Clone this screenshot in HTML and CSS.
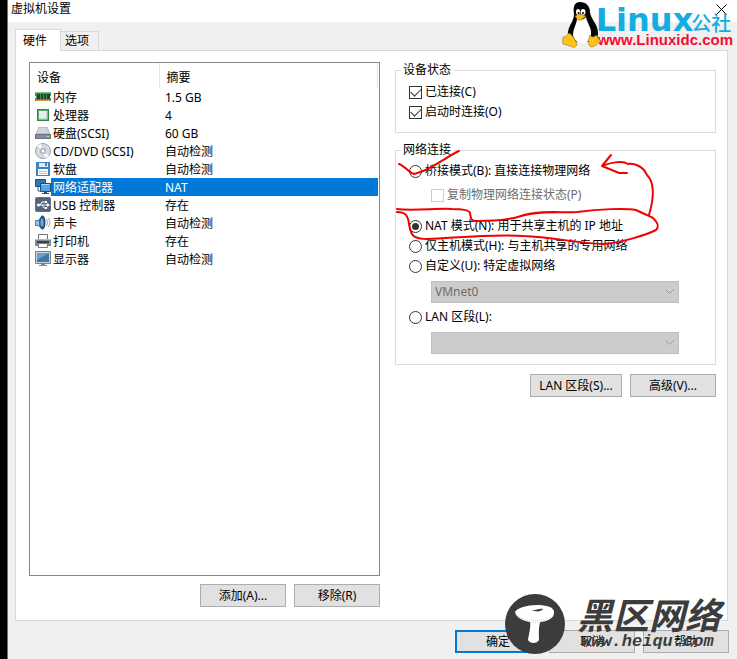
FILE: index.html
```
<!DOCTYPE html>
<html lang="zh-CN">
<head>
    <meta charset="UTF-8">
    <meta name="viewport" content="width=device-width, initial-scale=1.0">
    <title>虚拟机设置</title>
    <link rel="stylesheet" href="styles.css">
</head>
<body>
    <div class="dialog">
        <header class="titlebar">
            <h1>虚拟机设置</h1>
            <button class="close" type="button" aria-label="关闭">
                <svg width="11" height="11" viewBox="0 0 11 11"><path d="M.5.5l10 10M10.5.5l-10 10" stroke="#000" fill="none"/></svg>
            </button>
        </header>

        <nav class="tabs" role="tablist">
            <button class="tab active" type="button" role="tab" aria-selected="true">硬件</button>
            <button class="tab" type="button" role="tab" aria-selected="false">选项</button>
        </nav>

        <main class="panel">
            <section class="devices">
                <div class="device-list">
                    <table>
                        <thead>
                            <tr><th class="col-name">设备</th><th>摘要</th></tr>
                        </thead>
                        <tbody>
                            <tr>
                                <td><div class="device">
                                    <svg class="icon" viewBox="0 0 16 16"><path d="M0 3h16v9H0z" fill="#3c9a4c"/><path d="M0 3h16v1H0z" fill="#7cc487"/><path d="M2 5h3v5H2zM6 5h2v5H6zM9 5h2v5H9zM12 5h3v5h-3z" fill="#2b3d3a"/><path d="M1 11.500h14" stroke="#e2a54a" stroke-dasharray="1.500 .5"/><path d="M0 7h1v2H0zM15 7h1v2h-1z" fill="#fff"/></svg>
                                    <span>内存</span></div></td>
                                <td>1.5 GB</td>
                            </tr>
                            <tr>
                                <td><div class="device">
                                    <svg class="icon" viewBox="0 0 16 16"><path d="M2 2h12v12H2z" fill="#258a45"/><path d="M3 3h10v10H3z" fill="#58b36d"/><path d="M4 4h8v8H4z" fill="#e9ecea"/><path d="M4 12h8V4" fill="none" stroke="#b5bdb8"/></svg>
                                    <span>处理器</span></div></td>
                                <td>4</td>
                            </tr>
                            <tr>
                                <td><div class="device">
                                    <svg class="icon" viewBox="0 0 16 16"><path d="M3.500 2h9L16 10H0z" fill="#b3bdc8"/><path d="M4 3h8l2 5H2z" fill="#cfd6dd"/><path d="M0 9h16v5H0z" fill="#69747f"/><path d="M1 10h14v3H1z" fill="#828d99"/><path d="M12 11h2v1h-2z" fill="#c5ef66"/></svg>
                                    <span>硬盘(SCSI)</span></div></td>
                                <td>60 GB</td>
                            </tr>
                            <tr>
                                <td><div class="device">
                                    <svg class="icon" viewBox="0 0 16 16"><circle cx="8" cy="8" r="7.500" fill="#d5dadf" stroke="#9ca5ae"/><path d="M8 8L2 3a8 8 0 0 1 4-2zM8 8l6 5a8 8 0 0 1-4 2z" fill="#f7f9fb"/><circle cx="8" cy="8" r="3" fill="#a9b4be"/><circle cx="8" cy="8" r="1.500" fill="#fff"/></svg>
                                    <span>CD/DVD (SCSI)</span></div></td>
                                <td>自动检测</td>
                            </tr>
                            <tr>
                                <td><div class="device">
                                    <svg class="icon" viewBox="0 0 16 16"><path d="M1 1h14v14H1z" fill="#3b83c4"/><path d="M4 2h9v4H4z" fill="#dcebf7"/><path d="M10 2h2v3h-2z" fill="#3b83c4"/><path d="M3 8h10v6H3z" fill="#fff"/><path d="M4 10.500h8M4 12.500h8" stroke="#b7c4d0"/></svg>
                                    <span>软盘</span></div></td>
                                <td>自动检测</td>
                            </tr>
                            <tr class="selected">
                                <td><div class="device">
                                    <svg class="icon" viewBox="0 0 16 16"><path d="M.5.5h10v7H.5z" fill="#2f78b5" stroke="#164f86"/><path d="M3 8v4h3" fill="none" stroke="#3a5f80"/><path d="M5.500 4.500h10v8h-10z" fill="#58a5df" stroke="#164f86"/><path d="M6.500 5.500h8" stroke="#a4d2f3"/><path d="M9 13h3v1h2v1H7v-1h2z" fill="#24517c"/></svg>
                                    <span>网络适配器</span></div></td>
                                <td>NAT</td>
                            </tr>
                            <tr>
                                <td><div class="device">
                                    <svg class="icon" viewBox="0 0 16 16"><rect x=".5" y=".5" width="15" height="14" rx="1" fill="#50657c" stroke="#5f7489"/><path d="M3 8h10M5 8l2-3h3M7 8l2 3h2" fill="none" stroke="#fff"/><circle cx="3.500" cy="8" r="1.500" fill="#fff"/><path d="M12 6l3 2-3 2zM10 4h2v2h-2zM10 10h2v2h-2z" fill="#fff"/></svg>
                                    <span>USB 控制器</span></div></td>
                                <td>存在</td>
                            </tr>
                            <tr>
                                <td><div class="device">
                                    <svg class="icon" viewBox="0 0 16 16"><path d="M0 5h3l5-5v15l-5-4H0z" fill="#4a83b6"/><path d="M1 6h3v4H1z" fill="#9cc4e4"/><ellipse cx="7.500" cy="7.500" rx="3" ry="7" fill="#24527f"/><ellipse cx="7" cy="7.500" rx="1.500" ry="4" fill="#76acd8"/><path d="M11.500 4q2 3.500 0 7M13.500 3q3 4.500 0 9" fill="none" stroke="#9aaab8"/></svg>
                                    <span>声卡</span></div></td>
                                <td>自动检测</td>
                            </tr>
                            <tr>
                                <td><div class="device">
                                    <svg class="icon" viewBox="0 0 16 16"><path d="M3.500 1.500h9v5h-9z" fill="#fff" stroke="#6b7480"/><path d="M0 6h16v7H0z" fill="#858c99"/><path d="M0 6h16v1H0z" fill="#b6bcc6"/><path d="M2 8h12v2H2z" fill="#3d4453"/><path d="M3.500 10.500h9v4h-9z" fill="#fff" stroke="#737b88"/></svg>
                                    <span>打印机</span></div></td>
                                <td>存在</td>
                            </tr>
                            <tr>
                                <td><div class="device">
                                    <svg class="icon" viewBox="0 0 16 16"><path d="M.5.5h15v12H.5z" fill="#ccd5dd" stroke="#72818f"/><path d="M2 2h12v9H2z" fill="#3f78a9"/><path d="M2 2h12L2 9z" fill="#6e9fc7"/><path d="M6 13h4v1h2v1H4v-1h2z" fill="#7f8b96"/></svg>
                                    <span>显示器</span></div></td>
                                <td>自动检测</td>
                            </tr>
                        </tbody>
                    </table>
                </div>
                <div class="actions">
                    <button class="btn" type="button">添加(A)...</button>
                    <button class="btn" type="button">移除(R)</button>
                </div>
            </section>

            <form class="settings">
                <fieldset>
                    <legend>设备状态</legend>
                    <label class="option"><input type="checkbox" checked>已连接(C)</label>
                    <label class="option"><input type="checkbox" checked>启动时连接(O)</label>
                </fieldset>

                <fieldset>
                    <legend>网络连接</legend>
                    <label class="option"><input type="radio" name="network">桥接模式(B): 直接连接物理网络</label>
                    <label class="option nested"><input type="checkbox" disabled>复制物理网络连接状态(P)</label>
                    <label class="option"><input type="radio" name="network" checked>NAT 模式(N): 用于共享主机的 IP 地址</label>
                    <label class="option"><input type="radio" name="network">仅主机模式(H): 与主机共享的专用网络</label>
                    <label class="option"><input type="radio" name="network">自定义(U): 特定虚拟网络</label>
                    <div class="dropdown">
                        <select disabled aria-label="特定虚拟网络"><option>VMnet0</option></select>
                        <svg width="9" height="6" viewBox="0 0 9 6"><path d="M.5.5l4 4 4-4" stroke="#999" fill="none"/></svg>
                    </div>
                    <label class="option"><input type="radio" name="network">LAN 区段(L):</label>
                    <div class="dropdown">
                        <select disabled aria-label="LAN 区段"><option></option></select>
                        <svg width="9" height="6" viewBox="0 0 9 6"><path d="M.5.5l4 4 4-4" stroke="#999" fill="none"/></svg>
                    </div>
                </fieldset>

                <div class="actions">
                    <button class="btn wide" type="button">LAN 区段(S)...</button>
                    <button class="btn" type="button">高级(V)...</button>
                </div>
            </form>
        </main>

        <footer class="actions footer">
            <button class="btn default" type="button">确定</button>
            <button class="btn" type="button">取消</button>
            <button class="btn" type="button">帮助</button>
        </footer>

        <!-- hand-drawn marks -->
        <svg class="marks" width="270" height="100" viewBox="393 148 270 100">
            <path d="M399 164C405 166 409 173 414 174C430 171 444 158 459 151"/>
            <path d="M649 215C654 198 655 183 647 175C643 166 634 163 628 164C622 160 609 163 602 166L611 155M602 166L619 173L627 173"/>
            <path d="M397 209C412 211 440 208 452 209C463 209 469 210 470 213C471 219 471 221 476 221C495 221 510 220 521 216C538 210 560 213 577 212C600 209 625 208 636 210C644 214 650 216 653 218C657 222 660 226 656 230C648 234 622 243 603 244C576 243 552 237 523 236C490 234 455 238 428 239C410 239 411 233 409 224C408 215 405 212 397 212"/>
        </svg>
    </div>

    <div class="linux-mark">
        <svg class="tux" width="40" height="46" viewBox="0 0 40 46">
            <path d="M18 0c6 0 10 4 10 10 0 6 8 12 8 21 0 5-2 8-5 9H12c-4-1-7-4-6-10 1-7 6-11 6-18C11 5 12 0 18 0z" fill="#050505"/>
            <path d="M15 16c3 3 6 2 9-1 1 6 6 11 5 18-1 6-4 8-9 8s-8-3-9-8c0-7 4-11 4-17z" fill="#fff"/>
            <ellipse cx="16" cy="10" rx="2" ry="3" fill="#fff"/><ellipse cx="21" cy="10" rx="2.500" ry="3" fill="#fff"/>
            <circle cx="16.500" cy="11" r="1"/><circle cx="21" cy="11" r="1"/>
            <path d="M13 14l5-2 6 2-5 4h-3z" fill="#f9bd16" stroke="#a66d00" stroke-width=".5"/>
            <path d="M7 31c3 1 7 8 8 11-1 4-4 4-7 2L1 42c-1-2 0-4 0-7 3 0 4-2 6-4z" fill="#f9c31c" stroke="#8d6500" stroke-width=".5"/>
            <path d="M28 33c1 2 4 3 6 0 2 3 3 5 5 6-3 2-6 6-10 6-3-1-3-7-1-12z" fill="#f9c31c" stroke="#8d6500" stroke-width=".5"/>
        </svg>
        <div class="linux-name">Linux<span>公社</span></div>
        <div class="linux-url">www.Linuxidc.com</div>
    </div>

    <div class="heiqu-mark">
        <svg width="60" height="60" viewBox="0 0 60 60">
            <circle cx="30" cy="30" r="30" fill="#3c3c3c"/>
            <path d="M24 24c3 7 0 14-1 22 2 4 9 4 11 0 0-8-1-15 3-22z" fill="#fff"/>
            <path d="M10 18c2-4 12-7 22-7 9 0 18 2 17 8 0 5-6 8-13 9-12 2-25-3-26-10z" fill="#fff"/>
            <path d="M13 22c8 6 22 6 33 1M16 25c9 4 18 4 27 1" fill="none" stroke="#aaa" stroke-width=".5" stroke-dasharray="1 1"/>
            <path d="M26 16c4 1 8-2 12-1-2 3-7 3-12 1z" fill="#3c3c3c"/>
        </svg>
        <div>
            <div class="heiqu-name">黑区网络</div>
            <div class="heiqu-url">www.heiqu.com</div>
        </div>
    </div>
</body>
</html>
```
FILE: styles.css
```
* {
    box-sizing: border-box;
}
body {
    margin: 0;
    background: #000;
    color: #000;
    font: 12px/16px "Noto Sans", "Noto Sans CJK SC", sans-serif;
}
button, select {
    font: inherit;
    color: inherit;
}
.dialog {
    position: relative;
    display: flex;
    flex-direction: column;
    min-height: 100vh;
    margin-left: 7px;
    border-left: 1px solid #3c7fb8;
    background: #f0f0f0;
}
.titlebar {
    display: flex;
    justify-content: space-between;
    align-items: center;
    height: 22px;
    padding: 0 10px 4px 3px;
    background: #fff;
}
.titlebar h1 {
    margin: 0;
    font-size: 12px;
    font-weight: normal;
}
.close {
    display: flex;
    padding: 0;
    border: none;
    background: none;
}

/* tabs */
.tabs {
    display: flex;
    align-items: flex-end;
    margin: 7px 0 -1px 7px;
}
.tab {
    height: 20px;
    padding: 0 9px 0 4px;
    border: 1px solid #d9d9d9;
    border-left: none;
    background: #f0f0f0;
}
.tab.active {
    height: 22px;
    padding: 0 13px 0 7px;
    border-left: 1px solid #d9d9d9;
    border-bottom: none;
    background: #fff;
    z-index: 1;
}
.panel {
    flex: 1;
    display: grid;
    grid-template-columns: 351fr 321fr;
    gap: 15px;
    margin: 0 9px 0 7px;
    padding: 11px 11px 13px 13px;
    border: 1px solid #d9d9d9;
    background: #fff;
}

/* device list */
.devices {
    display: flex;
    flex-direction: column;
    gap: 8px;
}
.device-list {
    flex: 1;
    padding-right: 1px;
    border: 1px solid #828790;
}
table {
    width: 100%;
    border-collapse: collapse;
}
th, td {
    padding: 2px 0 0 6px;
    line-height: 16px;
    text-align: left;
    font-weight: normal;
}
th {
    height: 25px;
    padding: 4px 0 0 7px;
    border-right: 1px solid #e5e5e5;
}
.col-name {
    width: 129px;
}
td {
    height: 18px;
}
td:first-child {
    padding: 0 0 0 5px;
}
.device {
    display: flex;
    align-items: center;
}
.device span {
    flex: 1;
    padding: 2px 0 0 2px;
}
.icon {
    width: 16px;
    height: 16px;
}
.selected span, .selected td:last-child {
    background: #0078d7;
    color: #fff;
}

/* buttons */
.actions {
    display: flex;
    justify-content: flex-end;
    gap: 8px;
}
.btn {
    min-width: 86px;
    height: 23px;
    padding: 0 5px;
    border: 1px solid #adadad;
    background: #e1e1e1;
}
.btn.wide {
    min-width: 92px;
}
.btn.default {
    border: 2px solid #0078d7;
}
.footer {
    padding: 9px 8px 6px;
}

/* settings */
.settings {
    display: flex;
    flex-direction: column;
    gap: 9px;
}
fieldset {
    min-width: 0;
    margin: 0;
    padding: 4px 36px 10px 13px;
    border: 1px solid #dcdcdc;
}
fieldset + fieldset {
    padding-top: 3px;
}
legend {
    margin-left: -8px;
    padding: 0 3px 0 2px;
}
.option {
    display: flex;
    align-items: center;
    gap: 3px;
    height: 20px;
}
.option.nested {
    margin: 4px 0 11px 22px;
    color: #6d6d6d;
}
input {
    flex: none;
    display: grid;
    place-content: center;
    width: 13px;
    height: 13px;
    margin: 0;
    border: 1px solid #333;
    background: #fff;
    appearance: none;
}
input[type="radio"] {
    border-radius: 50%;
}
input[type="radio"]:checked::before {
    content: "";
    width: 7px;
    height: 7px;
    border-radius: 50%;
    background: #333;
}
input[type="checkbox"]:checked::before {
    content: "";
    width: 9px;
    height: 5px;
    margin-bottom: 3px;
    border: solid #333;
    border-width: 0 0 1px 1px;
    transform: rotate(-45deg);
}
input:disabled {
    border-color: #ccc;
}
.dropdown {
    display: flex;
    align-items: center;
    margin: 5px 0 4px 22px;
}
.dropdown:last-child {
    margin-bottom: 0;
}
.dropdown svg {
    margin-left: -14px;
}
select {
    width: 100%;
    height: 22px;
    padding: 0 3px;
    border: 1px solid #bfbfbf;
    border-radius: 0;
    background: #ccc;
    appearance: none;
}
select:disabled {
    color: #6d6d6d;
    opacity: 1;
}

/* overlays */
.marks {
    position: absolute;
    left: 385px;
    top: 148px;
    fill: none;
    stroke: #f00000;
    stroke-width: 2;
    stroke-linecap: round;
    pointer-events: none;
}
.linux-mark {
    position: absolute;
    top: 2px;
    right: 4px;
    padding-left: 36px;
    pointer-events: none;
}
.tux {
    position: absolute;
    left: 0;
    top: 0;
}
.linux-name {
    display: flex;
    align-items: baseline;
    height: 31px;
    margin-left: -2px;
    font: bold 32px/36px "DejaVu Sans", sans-serif;
    color: #12aee2;
}
.linux-name span {
    margin-left: -2px;
    font: 500 20px/36px "Noto Sans CJK SC", sans-serif;
}
.linux-url {
    font: bold 15px/14px "Liberation Sans", sans-serif;
    color: #fa0a32;
}
.heiqu-mark {
    position: absolute;
    top: 594px;
    right: 16px;
    display: flex;
    gap: 12px;
    color: #3c3c3c;
    pointer-events: none;
}
.heiqu-name {
    font: italic bold 36px/38px "Noto Sans CJK SC", sans-serif;
}
.heiqu-url {
    padding-left: 4px;
    font: italic bold 17px/20px "Liberation Mono", monospace;
}
```
